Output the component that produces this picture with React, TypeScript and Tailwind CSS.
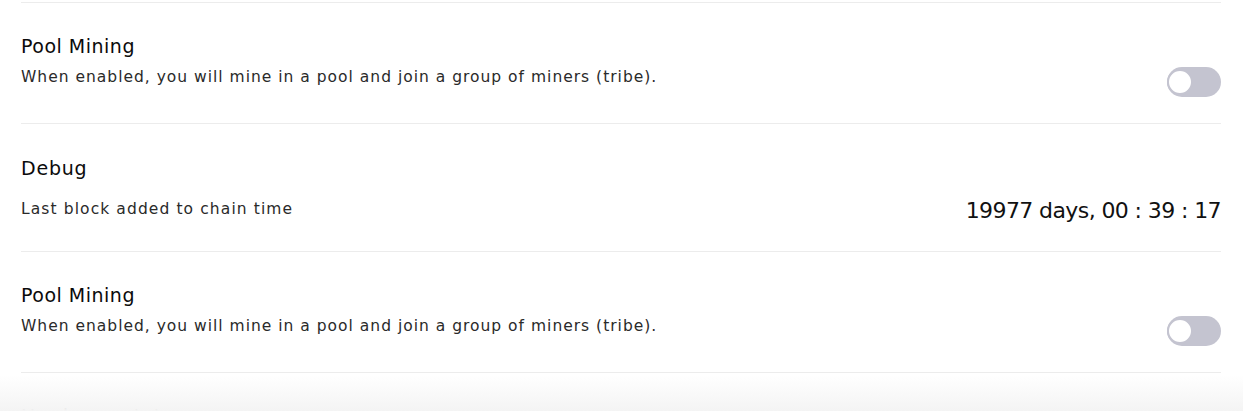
import { useState } from "react"

const Toggle = ({ on, onChange }: { on: boolean; onChange: () => void }) => {
    return (
        <button
            type="button"
            onClick={onChange}
            className={`relative block h-[30px] w-[54px] shrink-0 rounded-full transition-colors ${on ? "bg-[#5c5cf0]" : "bg-[#c4c4d0]"}`}
        >
            <span
                className={`absolute top-[2px] h-[26px] w-[26px] rounded-full border-2 border-[#c4c4d0] bg-white transition-all ${on ? "left-[26px]" : "left-0"}`}
            />
        </button>
    )
}

const PoolMining = () => {
    const [enabled, setEnabled] = useState(false)

    return (
        <section className="border-t border-[#ececec] pt-[32px] pb-[26px]">
            <h3 className="text-[19px] leading-[22px] tracking-[0.5px] text-[#0b0b0b]">Pool Mining</h3>
            <div className="mt-[10px] flex items-start justify-between">
                <p className="text-[15.5px] leading-[21px] tracking-[1px] text-[#2a2a2a]">
                    When enabled, you will mine in a pool and join a group of miners (tribe).
                </p>
                <Toggle on={enabled} onChange={() => setEnabled(!enabled)} />
            </div>
        </section>
    )
}

const Debug = () => {
    return (
        <section className="border-t border-[#ececec] pt-[33px] pb-[25px]">
            <h3 className="text-[19px] leading-[22px] tracking-[0.8px] text-[#0b0b0b]">Debug</h3>
            <div className="mt-[17px] flex items-center justify-between">
                <p className="-mt-[4px] text-[15.5px] leading-[21px] tracking-[1.1px] text-[#2a2a2a]">Last block added to chain time</p>
                <span className="text-[22px] leading-[30px] tracking-[-0.6px] text-[#111]">19977 days, 00 : 39 : 17</span>
            </div>
        </section>
    )
}

export default function App() {
    return (
        <div className="relative h-[411px] w-full overflow-hidden bg-white" style={{ fontFamily: "'DejaVu Sans', sans-serif" }}>
            <div className="pl-[21px] pr-[22px] pt-[2px]">
                <PoolMining />
                <Debug />
                <PoolMining />
                <section className="border-t border-[#ececec] pt-[32px]">
                    <h3 className="text-[19px] leading-[22px] tracking-[0.5px] text-[#0b0b0b]">Hardware stats</h3>
                </section>
            </div>

            {/* fade at the bottom of the scroll area */}
            <div className="pointer-events-none absolute bottom-0 left-0 right-0 h-[36px] bg-gradient-to-b from-[#ffffff]/40 to-[#f4f4f4]" />
        </div>
    )
}
